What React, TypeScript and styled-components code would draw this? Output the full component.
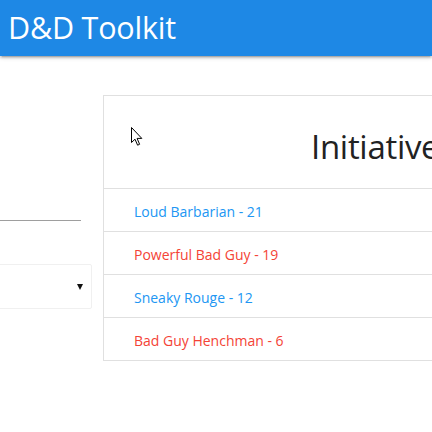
import React from "react";
import styled, { createGlobalStyle } from "styled-components";

const Global = createGlobalStyle`
  html, body { margin: 0; padding: 0; background: #fff; overflow: hidden; }
  body { font-family: "Open Sans", "Noto Sans", Arial, sans-serif; }
  * { box-sizing: border-box; }
`;

const Page = styled.div`
  position: relative;
  width: 432px;
  height: 432px;
  overflow: hidden;
`;

const NavBar = styled.header`
  height: 56px;
  background: #1e88e5;
  color: #fff;
  display: flex;
  align-items: center;
  padding-left: 8px;
  box-shadow: 0 2px 2px 0 rgba(0,0,0,0.14), 0 3px 1px -2px rgba(0,0,0,0.12), 0 1px 5px 0 rgba(0,0,0,0.2);
`;

const Brand = styled.span`
  font-size: 30.5px;
  line-height: 56px;
  letter-spacing: -0.2px;
  margin-top: -2px;
`;

const Main = styled.main`
  display: flex;
  align-items: flex-start;
  gap: 11px;
  padding-top: 39px;
  margin-left: -10px;
`;

const FormColumn = styled.div`
  width: 102px;
  flex: none;
  display: flex;
  flex-direction: column;
  padding-top: 81px;
  gap: 43px;
`;

const TextInput = styled.div`
  width: 91px;
  height: 45px;
  border-bottom: 1px solid #9e9e9e;
`;

const Select = styled.div`
  width: 102px;
  height: 45px;
  border: 1px solid #f0f0f0;
  border-radius: 2px;
  display: flex;
  align-items: center;
  justify-content: flex-end;
  padding-right: 8px;
`;

const Caret = styled.span`
  width: 0;
  height: 0;
  border-left: 3.5px solid transparent;
  border-right: 3.5px solid transparent;
  border-top: 6px solid #111;
`;

const Card = styled.section`
  width: 560px;
  flex: none;
  border: 1px solid #e0e0e0;
`;

const Title = styled.h2`
  margin: 0;
  height: 93px;
  padding-left: 207px;
  padding-top: 31px;
  font-size: 33px;
  font-weight: 400;
  line-height: 40px;
  color: #222;
  letter-spacing: -0.3px;
  border-bottom: 1px solid #e0e0e0;
`;

const Row = styled.div<{ $enemy: boolean }>`
  height: 43px;
  padding-left: 30px;
  padding-top: 2px;
  display: flex;
  align-items: center;
  font-size: 14px;
  color: ${(p) => (p.$enemy ? "#f44336" : "#2196f3")};
  border-bottom: 1px solid #e0e0e0;
  &:last-child { border-bottom: none; height: 42px; }
`;

const Cursor = styled.svg`
  position: absolute;
  left: 131px;
  top: 127px;
`;

const combatants = [
  { name: "Loud Barbarian", init: 21, enemy: false },
  { name: "Powerful Bad Guy", init: 19, enemy: true },
  { name: "Sneaky Rouge", init: 12, enemy: false },
  { name: "Bad Guy Henchman", init: 6, enemy: true },
];

export default function App() {
  return (
    <Page>
      <Global />
      <NavBar>
        <Brand>D&amp;D Toolkit</Brand>
      </NavBar>
      <Main>
        <FormColumn>
          <TextInput />
          <Select>
            <Caret />
          </Select>
        </FormColumn>
        <Card>
          <Title>Initiative</Title>
          {combatants.map((c) => (
            <Row key={c.name} $enemy={c.enemy}>
              {c.name} - {c.init}
            </Row>
          ))}
        </Card>
      </Main>
      <Cursor width="13" height="20" viewBox="0 0 13 20">
        <path
          d="M0.5 0.5 L0.5 15.5 L4 12.2 L6.6 18.2 L8.6 17.3 L6.1 11.4 L10.8 11.4 Z"
          fill="#fff"
          stroke="#000"
          strokeWidth="1"
          strokeLinejoin="miter"
        />
      </Cursor>
    </Page>
  );
}
